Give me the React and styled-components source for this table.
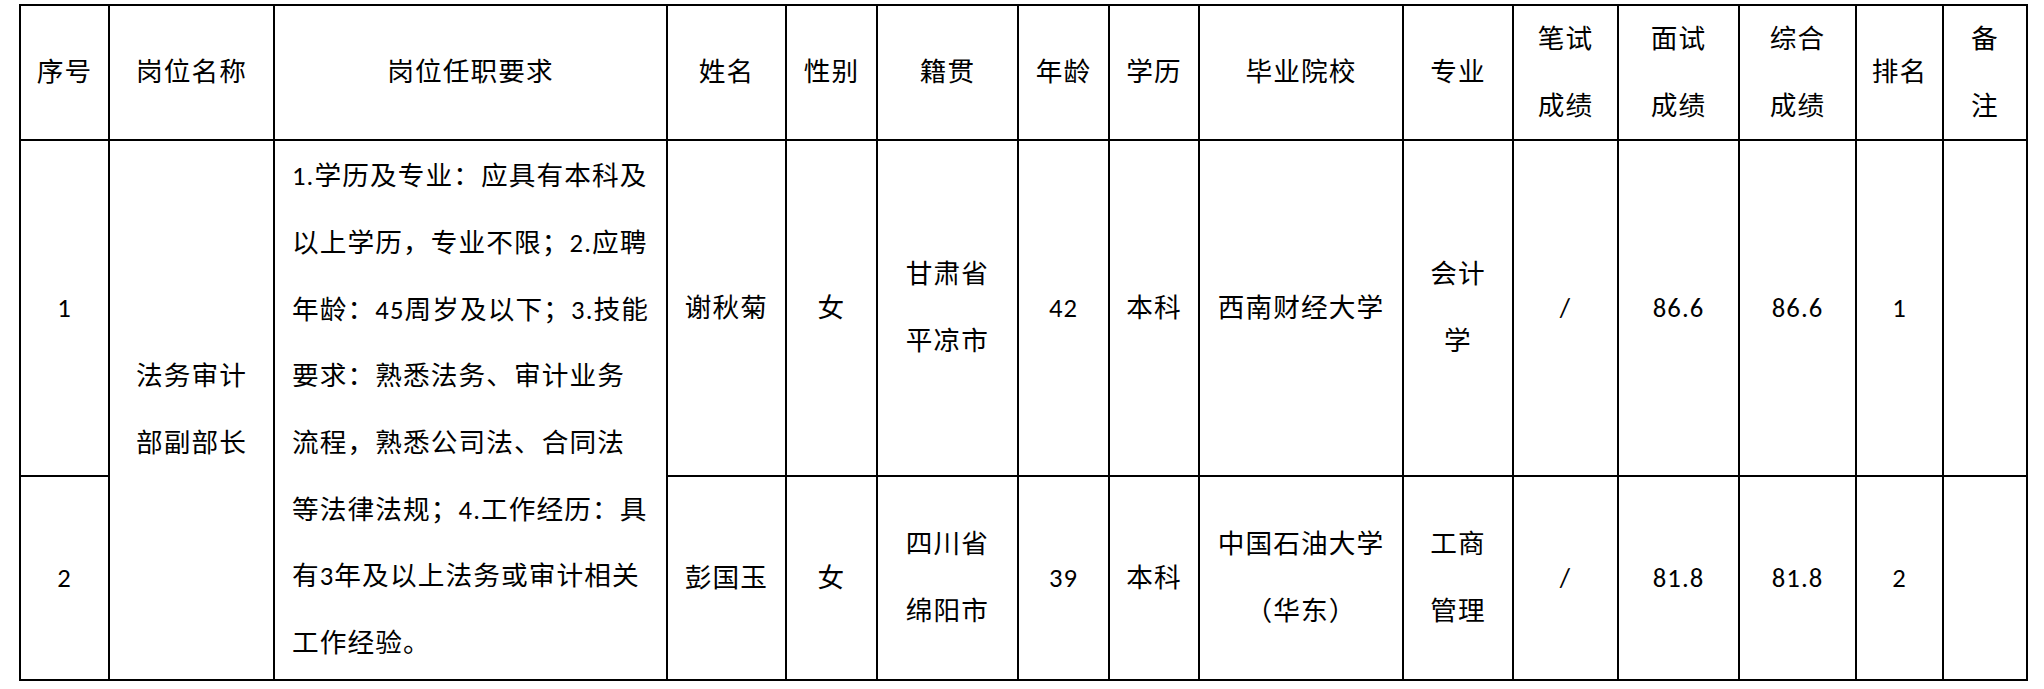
import React from "react";
import styled, { createGlobalStyle } from "styled-components";

const GlobalStyle = createGlobalStyle`
  html, body {
    margin: 0;
    padding: 0;
    background: #ffffff;
  }
  body {
    font-family: Carlito, Lato, "Noto Sans CJK SC", sans-serif;
    color: #000;
  }
`;

const COLS = [89, 165, 393, 119, 91, 141, 91, 90, 204, 110, 105, 121, 117, 87, 84];

const Page = styled.div`
  padding: 4px 0 0 19px;
`;

const Grid = styled.div`
  display: grid;
  grid-template-columns: ${COLS.map((c) => `${c}px`).join(" ")};
  grid-template-rows: 135px 336px 204px;
  width: max-content;
  border-left: 2px solid #000;
  border-top: 2px solid #000;
  font-family: Carlito, Lato, "Noto Sans CJK SC", sans-serif;
  font-size: 26.67px;
  font-weight: 400;
  line-height: 66.7px;
  letter-spacing: 1.1px;
  color: #000;
`;

const Cell = styled.div`
  box-sizing: border-box;
  border-right: 2px solid #000;
  border-bottom: 2px solid #000;
  display: flex;
  flex-direction: column;
  align-items: center;
  justify-content: center;
  text-align: center;
  white-space: nowrap;
  grid-row: ${(p) => (p.$span ? `span ${p.$span}` : "auto")};
`;

const RequirementCell = styled(Cell)`
  align-items: flex-start;
  text-align: left;
  padding-left: 17px;
`;

const Lines = ({ lines }) => {
  const arr = Array.isArray(lines) ? lines : [lines];
  return (
    <div>
      {arr.map((l, i) => (
        <React.Fragment key={i}>
          {i > 0 && <br />}
          {l}
        </React.Fragment>
      ))}
    </div>
  );
};

const HEADERS = [
  "序号",
  "岗位名称",
  "岗位任职要求",
  "姓名",
  "性别",
  "籍贯",
  "年龄",
  "学历",
  "毕业院校",
  "专业",
  ["笔试", "成绩"],
  ["面试", "成绩"],
  ["综合", "成绩"],
  "排名",
  ["备", "注"],
];

const POSITION = ["法务审计", "部副部长"];

const REQUIREMENTS = [
  "1.学历及专业：应具有本科及",
  "以上学历，专业不限；2.应聘",
  "年龄：45周岁及以下；3.技能",
  "要求：熟悉法务、审计业务",
  "流程，熟悉公司法、合同法",
  "等法律法规；4.工作经历：具",
  "有3年及以上法务或审计相关",
  "工作经验。",
];

const ROWS = [
  {
    no: "1",
    cells: [
      "谢秋菊",
      "女",
      ["甘肃省", "平凉市"],
      "42",
      "本科",
      "西南财经大学",
      ["会计", "学"],
      "/",
      "86.6",
      "86.6",
      "1",
      "",
    ],
  },
  {
    no: "2",
    cells: [
      "彭国玉",
      "女",
      ["四川省", "绵阳市"],
      "39",
      "本科",
      ["中国石油大学", "（华东）"],
      ["工商", "管理"],
      "/",
      "81.8",
      "81.8",
      "2",
      "",
    ],
  },
];

export default function App() {
  return (
    <>
      <GlobalStyle />
      <Page>
        <Grid>
          {HEADERS.map((h, i) => (
            <Cell key={`h${i}`}>
              <Lines lines={h} />
            </Cell>
          ))}
          {ROWS.map((row, r) => (
            <React.Fragment key={`r${r}`}>
              <Cell>
                <Lines lines={row.no} />
              </Cell>
              {r === 0 && (
                <>
                  <Cell $span={2}>
                    <Lines lines={POSITION} />
                  </Cell>
                  <RequirementCell $span={2}>
                    <Lines lines={REQUIREMENTS} />
                  </RequirementCell>
                </>
              )}
              {row.cells.map((c, i) => (
                <Cell key={`c${r}-${i}`}>
                  <Lines lines={c} />
                </Cell>
              ))}
            </React.Fragment>
          ))}
        </Grid>
      </Page>
    </>
  );
}
